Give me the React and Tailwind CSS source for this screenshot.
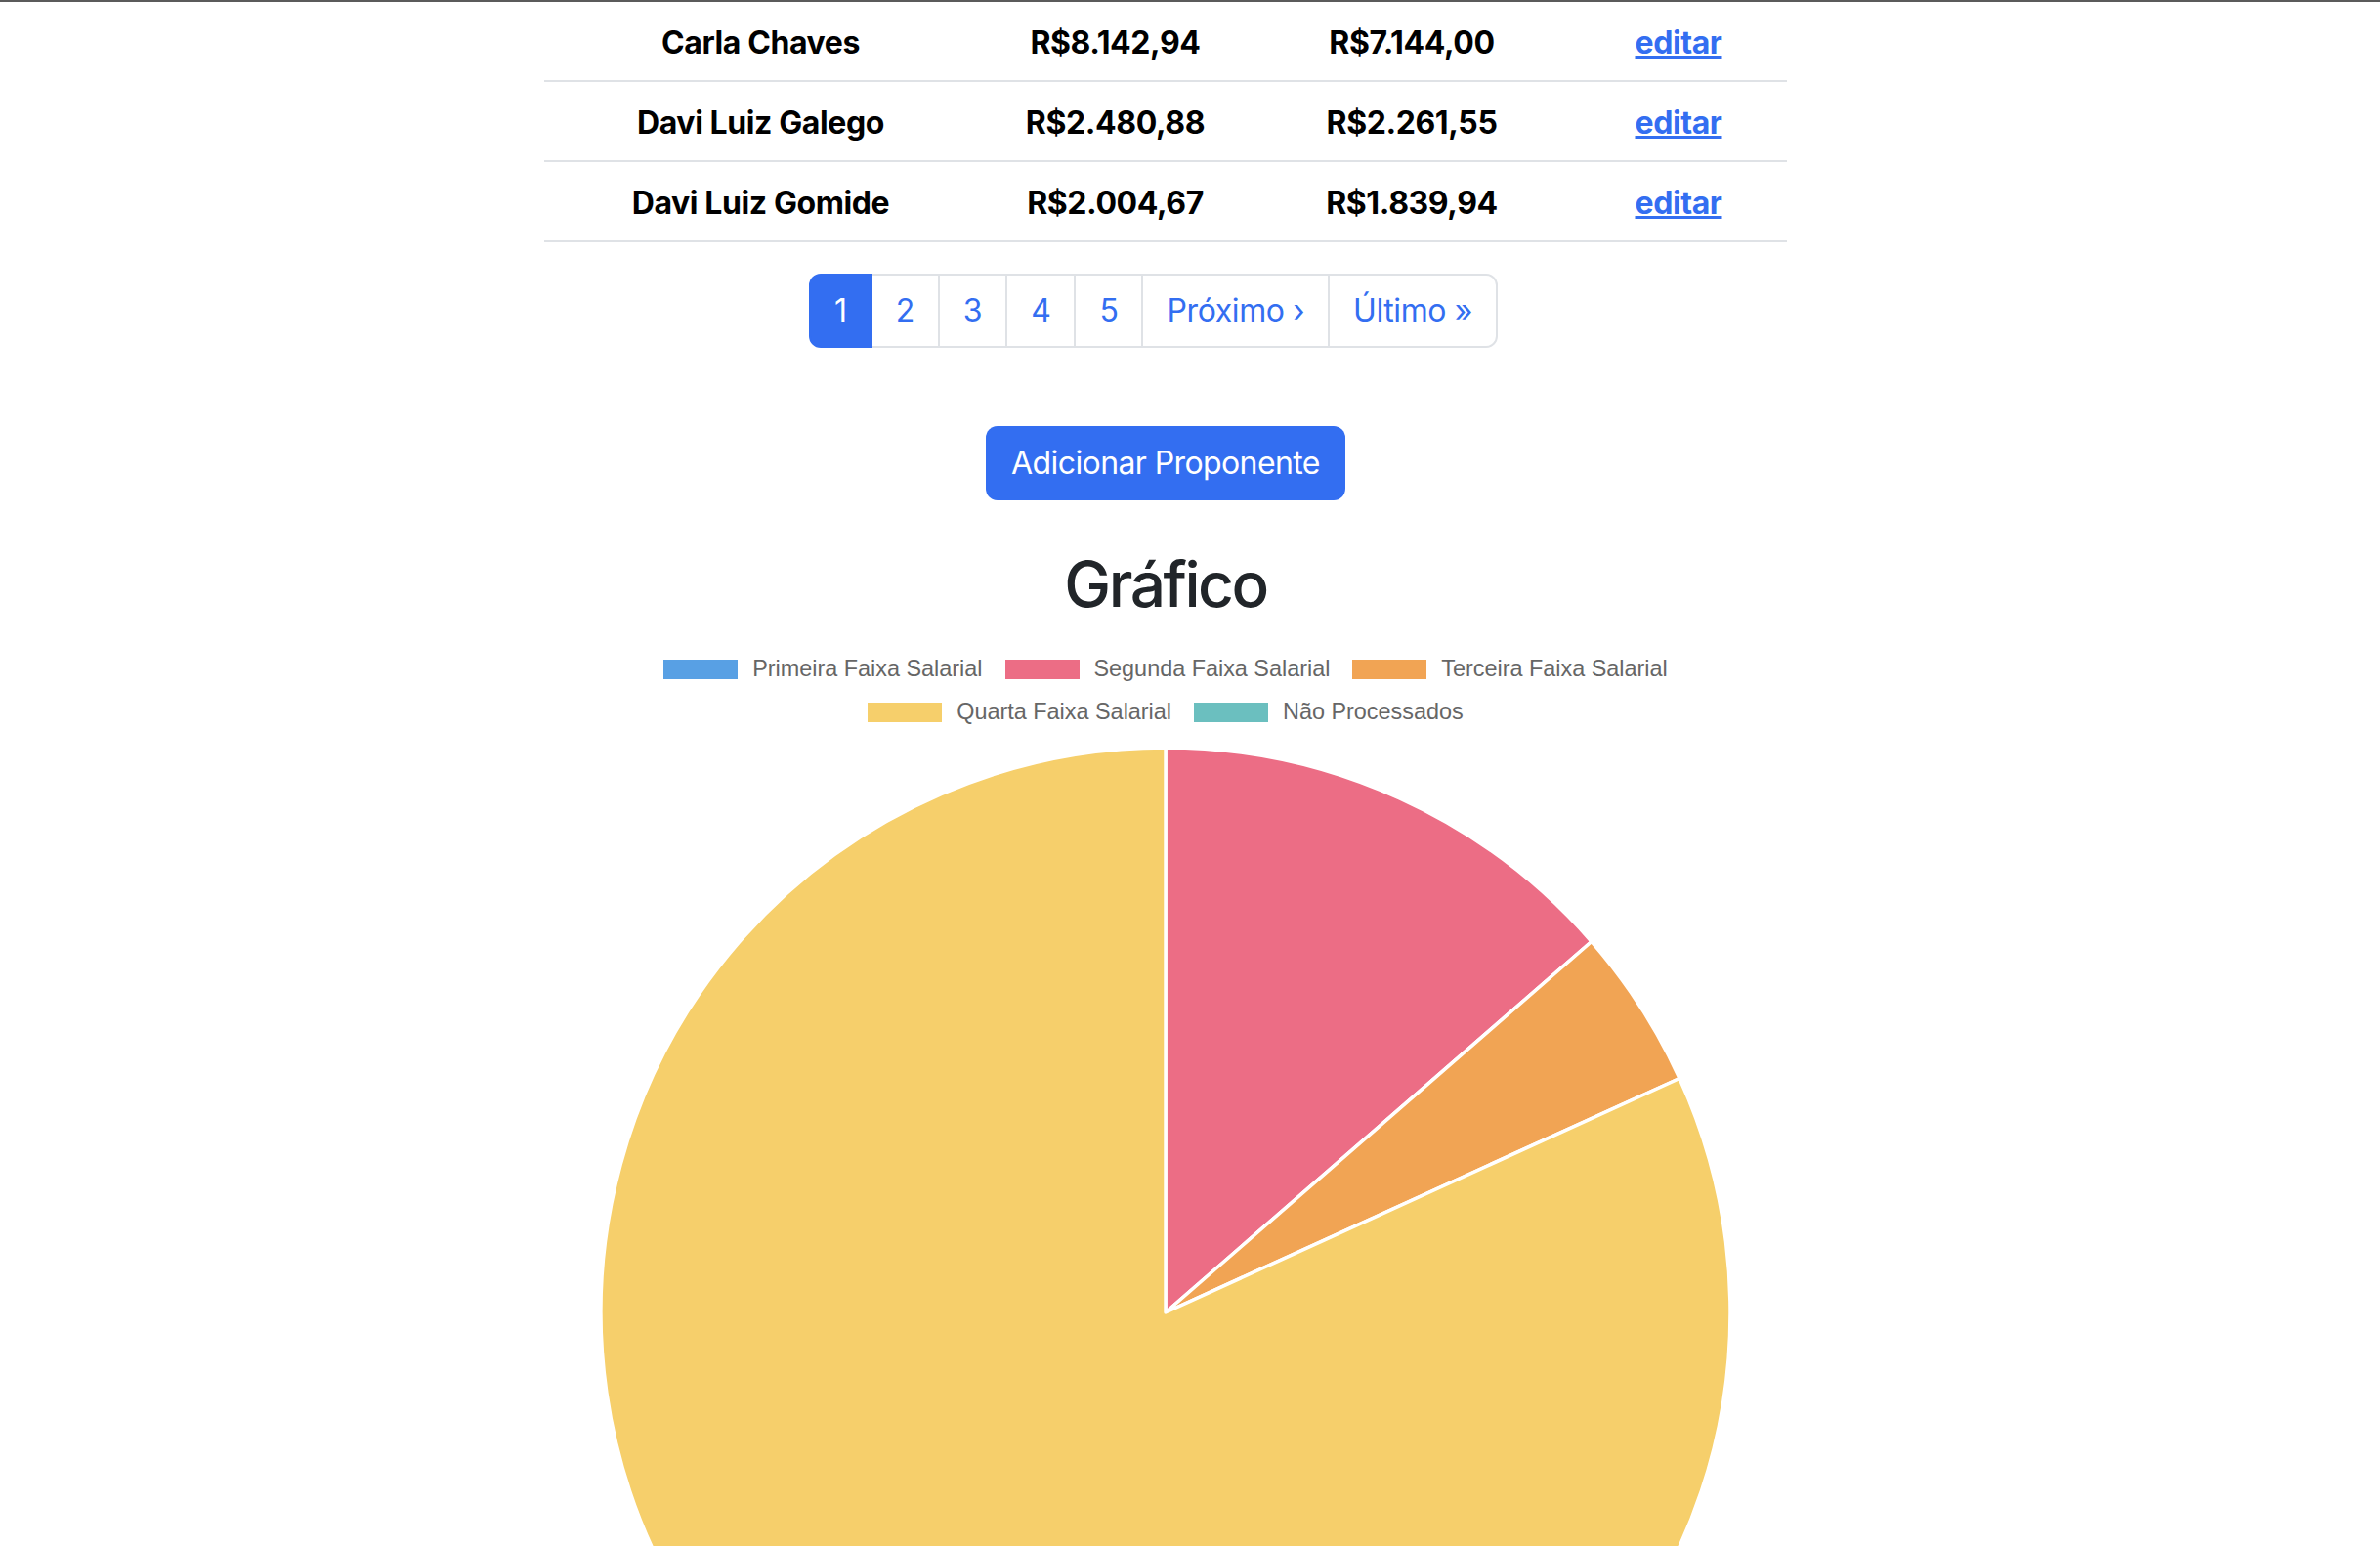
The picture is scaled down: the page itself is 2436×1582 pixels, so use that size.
import React from 'react';

const propostas = [
  { nome: 'Carla Chaves', salario: 'R$8.142,94', liquido: 'R$7.144,00' },
  { nome: 'Davi Luiz Galego', salario: 'R$2.480,88', liquido: 'R$2.261,55' },
  { nome: 'Davi Luiz Gomide', salario: 'R$2.004,67', liquido: 'R$1.839,94' },
];

// faixas do gráfico (mesma ordem do dataset)
const faixas = [
  { label: 'Primeira Faixa Salarial', cor: '#58a0e4', valor: 0 },
  { label: 'Segunda Faixa Salarial', cor: '#ec6d85', valor: 136 },
  { label: 'Terceira Faixa Salarial', cor: '#f1a454', valor: 46 },
  { label: 'Quarta Faixa Salarial', cor: '#f6cf6b', valor: 818 },
  { label: 'Não Processados', cor: '#6bbfbf', valor: 0 },
];

function Pizza({ raio = 578 }) {
  const total = faixas.reduce((s, f) => s + f.valor, 0);
  const c = raio;
  let angulo = 0;

  const ponto = (a) => [c + raio * Math.sin(a), c - raio * Math.cos(a)];

  const fatias = faixas
    .filter((f) => f.valor > 0)
    .map((f) => {
      const inicio = angulo;
      const fim = angulo + (f.valor / total) * Math.PI * 2;
      angulo = fim;
      const [x1, y1] = ponto(inicio);
      const [x2, y2] = ponto(fim);
      const grande = fim - inicio > Math.PI ? 1 : 0;
      return {
        cor: f.cor,
        d: `M${c},${c} L${x1},${y1} A${raio},${raio} 0 ${grande} 1 ${x2},${y2} Z`,
      };
    });

  return (
    <svg width={raio * 2} height={raio * 2} viewBox={`0 0 ${raio * 2} ${raio * 2}`} className="block">
      {fatias.map((f, i) => (
        <path key={i} d={f.d} fill={f.cor} stroke="#ffffff" strokeWidth="3.5" strokeLinejoin="round" />
      ))}
    </svg>
  );
}

function Legenda({ itens }) {
  return (
    <div className="flex h-[44px] items-center justify-center gap-[23px]">
      {itens.map((f) => (
        <div key={f.label} className="flex items-center gap-[15px]">
          <span className="block h-[20px] w-[76px]" style={{ backgroundColor: f.cor }} />
          <span className="font-['Liberation_Sans',Arial,sans-serif] text-[23.4px] leading-none text-[#666666]">
            {f.label}
          </span>
        </div>
      ))}
    </div>
  );
}

export default function App() {
  const paginas = ['1', '2', '3', '4', '5', 'Próximo ›', 'Último »'];

  return (
    <div className="min-h-screen overflow-hidden border-t-2 border-[#5b5b5b] bg-white font-['Inter',sans-serif]">
      <div className="flex flex-col items-center pr-[50px]">

        {/* Tabela de proponentes */}
        <div className="w-[1272px]">
          {propostas.map((p) => (
            <div
              key={p.nome}
              className="grid h-[82px] grid-cols-[443px_283px_324px_222px] items-center border-b-2 border-[#dfe2e6] pt-[3px] text-center text-[32px] font-bold tracking-[-0.4px] text-black"
            >
              <div>{p.nome}</div>
              <div>{p.salario}</div>
              <div>{p.liquido}</div>
              <div>
                <a href="#" className="text-[#336ef1] underline">editar</a>
              </div>
            </div>
          ))}
        </div>

        {/* Paginação */}
        <div className="mt-[32px] mr-[25px] flex">
          {paginas.map((pg, i) => {
            const ativo = i === 0;
            const primeiro = i === 0;
            const ultimo = i === paginas.length - 1;
            return (
              <a
                key={pg}
                href="#"
                className={`flex h-[76px] items-center border-2 px-[24px] text-[32px] tracking-[-0.4px] ${
                  ativo ? 'z-10 border-[#336ef1] bg-[#336ef1] text-white' : 'border-[#dfe2e6] bg-white text-[#336ef1]'
                } ${primeiro ? 'rounded-l-[12px]' : '-ml-[2px]'} ${ultimo ? 'rounded-r-[12px]' : ''}`}
              >
                {pg}
              </a>
            );
          })}
        </div>

        <button className="mt-[80px] h-[76px] rounded-[12px] bg-[#336ef1] px-[26px] text-[32px] tracking-[-0.6px] text-white">
          Adicionar Proponente
        </button>

        {/* Gráfico */}
        <h2 className="mt-[48px] text-[64px] font-medium leading-[1.2] tracking-[-2.5px] text-[#212529]">Gráfico</h2>

        <div className="mt-[26px]">
          <Legenda itens={faixas.slice(0, 3)} />
          <Legenda itens={faixas.slice(3)} />
        </div>

        <div className="mt-[14px]">
          <Pizza />
        </div>
      </div>
    </div>
  );
}
